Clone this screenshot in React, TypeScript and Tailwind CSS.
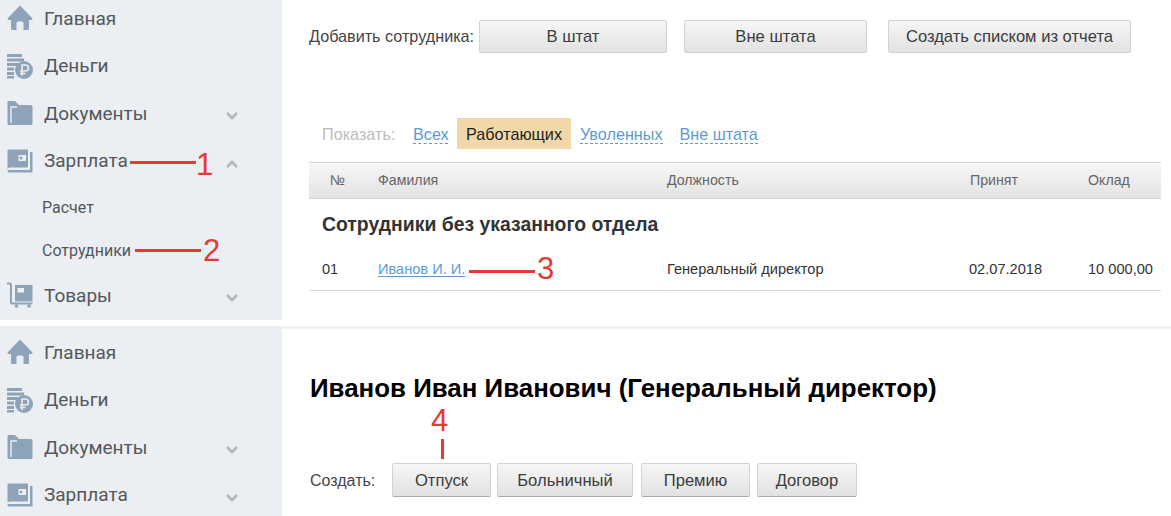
import React from 'react';

const sans = 'font-["Liberation_Sans",Arial,sans-serif]';

function HomeIcon() {
  return (
    <svg width="26" height="26" viewBox="0 0 26 26" fill="#8fa3b8">
      <path d="M13 0.5 L25.5 13.5 L25 15 L22 15 L22 23.5 Q22 25 20.5 25 L16.5 25 L16.5 18 Q16.5 16.5 15 16.5 L11 16.5 Q9.5 16.5 9.5 18 L9.5 25 L5.5 25 Q4 25 4 23.5 L4 15 L1 15 L0.5 13.5 Z" />
    </svg>
  );
}

function MoneyIcon() {
  return (
    <svg width="26" height="26" viewBox="0 0 26 26" fill="#8fa3b8">
      <rect x="0" y="1" width="15" height="3" />
      <rect x="0" y="5.5" width="17" height="3" />
      <rect x="0" y="10" width="11" height="3" />
      <rect x="0" y="14.5" width="7" height="3" />
      <rect x="0" y="19" width="7" height="3" />
      <rect x="0" y="23" width="7" height="2.5" />
      <circle cx="17" cy="17" r="9" />
      <path d="M15 23 V12 H18.5 A3 3 0 0 1 18.5 18 H13 M13 20.5 H18.5" fill="none" stroke="#ebeef2" strokeWidth="1.6" />
    </svg>
  );
}

function FolderIcon() {
  return (
    <svg width="26" height="26" viewBox="0 0 26 26" fill="#8fa3b8">
      <path d="M1.5 1 H8 L12 5 H23.5 Q25.5 5 25.5 7 V23.5 Q25.5 25 24 25 H2 Q0.5 25 0.5 23.5 V2 Q0.5 1 1.5 1 Z" />
      <path d="M4 23 V7 H10" fill="none" stroke="#ebeef2" strokeWidth="1.4" />
    </svg>
  );
}

function WalletIcon() {
  return (
    <svg width="26" height="24" viewBox="0 0 26 24" fill="#8fa3b8">
      <path d="M1.5 0.5 H21 V17 Q21 18.5 19.5 18.5 H2.5 L0.5 19.5 V1.5 Q0.5 0.5 1.5 0.5 Z" />
      <path d="M23 3 H25.5 V23.5 H2 Q0.5 23.5 0.5 21 H23 Z" />
      <rect x="11.5" y="6" width="7.5" height="6" fill="#ebeef2" />
      <circle cx="14" cy="9" r="1.5" fill="#8fa3b8" />
    </svg>
  );
}

function CartIcon() {
  return (
    <svg width="26" height="26" viewBox="0 0 26 26" fill="#8fa3b8">
      <path d="M0 0.5 H3.5 L5 2 V20.5 H25.5 V22.5 H4 L3 21.5 V3 L2.5 2.5 H0 Z" />
      <path d="M8 3 H25.5 V19.5 H8 Z M10.5 6 V10.5 H17 V6 Z" fillRule="evenodd" />
      <circle cx="9.5" cy="24" r="1.8" />
      <circle cx="22" cy="24" r="1.8" />
    </svg>
  );
}

function Chevron({ up }: { up?: boolean }) {
  return (
    <svg width="12" height="8" viewBox="0 0 12 8" fill="none" stroke="#b4b6b8" strokeWidth="2.6">
      <path d={up ? 'M1 7 L6 2 L11 7' : 'M1 1 L6 6 L11 1'} />
    </svg>
  );
}

function NavRow({ icon, label, chevron }: { icon: React.ReactNode; label: string; chevron?: 'up' | 'down' }) {
  return (
    <div className="flex items-center h-[47.5px] shrink-0 pl-[7px]">
      <div className="w-[26px] h-[26px] flex items-center justify-center">{icon}</div>
      <span className="ml-[11px] pt-[1px] text-[19px] text-[#54585c]">{label}</span>
      {chevron && (
        <span className="ml-auto mr-[44px] mt-[6px] flex">
          <Chevron up={chevron === 'up'} />
        </span>
      )}
    </div>
  );
}

function Btn({ children, className }: { children: React.ReactNode; className: string }) {
  return (
    <button className={`flex items-center justify-center pt-[2px] rounded-[2px] border border-[#d2d2d2] bg-gradient-to-b from-[#f6f6f6] to-[#e2e2e2] text-[16.6px] text-[#3c3c3c] ${className}`}>
      {children}
    </button>
  );
}

function Tab({ children, className }: { children: React.ReactNode; className: string }) {
  return (
    <a className={`mt-[2px] text-[16.2px] leading-[18px] text-[#5b9bd5] border-b border-dashed border-[#5b9bd5] ${className}`}>
      {children}
    </a>
  );
}

export default function App() {
  return (
    <div className={`relative w-[1171px] h-[516px] overflow-hidden bg-white ${sans}`}>
      {/* top part */}
      <div className="flex h-[320px]">
        <aside className="w-[282px] h-full bg-[#ebeef2] overflow-hidden font-['Roboto',sans-serif]">
          <div className="-mt-[5.5px]">
            <NavRow icon={<HomeIcon />} label="Главная" />
            <NavRow icon={<MoneyIcon />} label="Деньги" />
            <NavRow icon={<FolderIcon />} label="Документы" chevron="down" />
            <NavRow icon={<WalletIcon />} label="Зарплата" chevron="up" />
            <div className="pl-[42px] text-[16px] text-[#54585c]">
              <div className="h-[46px] flex items-center">Расчет</div>
              <div className="h-[41px] flex items-center">Сотрудники</div>
            </div>
            <NavRow icon={<CartIcon />} label="Товары" chevron="down" />
          </div>
        </aside>

        <main className="flex-1 pl-[27px] pt-[20px]">
          <div className="flex items-center h-[33px]">
            <span className="w-[170px] text-[16.2px] text-[#444]">Добавить сотрудника:</span>
            <Btn className="w-[188px] h-[33px]">В штат</Btn>
            <Btn className="w-[183px] h-[33px] ml-[17px]">Вне штата</Btn>
            <Btn className="w-[243px] h-[33px] ml-[21px]">Создать списком из отчета</Btn>
          </div>

          <div className="flex items-center h-[31px] mt-[65px] pl-[13px]">
            <span className="w-[91px] mt-[2px] text-[16.2px] text-[#bcbcbc]">Показать:</span>
            <Tab className="w-[35px]">Всех</Tab>
            <span className="ml-[9px] w-[114px] h-[31px] pt-[1px] flex items-center justify-center bg-[#f0d8a8] text-[16.2px] text-[#222]">Работающих</span>
            <Tab className="ml-[9px]">Уволенных</Tab>
            <Tab className="ml-[17px]">Вне штата</Tab>
          </div>

          <div className="w-[852px] mt-[13px]">
            <div className="grid grid-cols-[69px_289px_303px_118px_73px] items-center h-[37px] pt-[1px] border-y border-[#d6d6d6] bg-gradient-to-b from-[#f6f6f6] to-[#e4e4e4] text-[14.2px] text-[#666]">
              <span className="pl-[21px]">№</span>
              <span>Фамилия</span>
              <span>Должность</span>
              <span>Принят</span>
              <span>Оклад</span>
            </div>
            <div className="pl-[13px] pt-[14px] text-[19.4px] leading-[22px] font-bold text-[#333]">
              Сотрудники без указанного отдела
            </div>
            <div className="grid grid-cols-[69px_289px_302px_119px_73px] items-center h-[45px] mt-[11px] pt-[4px] border-b border-[#d8d8d8] text-[14.6px] text-[#333]">
              <span className="pl-[13px]">01</span>
              <span>
                <a className="text-[#5b9bd5] underline underline-offset-2">Иванов И. И.</a>
              </span>
              <span>Генеральный директор</span>
              <span>02.07.2018</span>
              <span>10 000,00</span>
            </div>
          </div>
        </main>
      </div>

      <div className="h-[6px]" />

      {/* bottom part */}
      <div className="flex h-[190px]">
        <aside className="w-[282px] h-full bg-[#ebeef2] overflow-hidden pt-[2.5px] font-['Roboto',sans-serif]">
          <NavRow icon={<HomeIcon />} label="Главная" />
          <NavRow icon={<MoneyIcon />} label="Деньги" />
          <NavRow icon={<FolderIcon />} label="Документы" chevron="down" />
          <NavRow icon={<WalletIcon />} label="Зарплата" chevron="down" />
        </aside>

        <main className="flex-1 pl-[28px] border-t-[3px] border-[#f0f0f0]">
          <h1 className="mt-[42px] text-[25.9px] leading-[34px] font-bold text-black">
            Иванов Иван Иванович (Генеральный директор)
          </h1>
          <div className="flex items-center h-[34px] mt-[58px]">
            <span className="w-[82px] pt-[1px] text-[16px] text-[#444]">Создать:</span>
            <Btn className="w-[99px] h-[34px] border-b-[#aaa] border-b-dotted">Отпуск</Btn>
            <Btn className="w-[136px] h-[34px] ml-[6px] border-b-[#aaa] border-b-dotted">Больничный</Btn>
            <Btn className="w-[109px] h-[34px] ml-[8px] border-b-[#aaa] border-b-dotted">Премию</Btn>
            <Btn className="w-[100px] h-[34px] ml-[7px] border-b-[#aaa] border-b-dotted">Договор</Btn>
          </div>
        </main>
      </div>

      {/* red notes over the screenshot */}
      <div className="absolute left-[130px] top-[161px] w-[66px] h-[3px] bg-[#e53a32]" />
      <span className="absolute left-[196px] top-[147px] text-[31px] leading-[35px] text-[#e53a32]">1</span>
      <div className="absolute left-[135px] top-[249px] w-[66px] h-[3px] bg-[#e53a32]" />
      <span className="absolute left-[203px] top-[233px] text-[31px] leading-[35px] text-[#e53a32]">2</span>
      <div className="absolute left-[469px] top-[270px] w-[66px] h-[3px] bg-[#e53a32]" />
      <span className="absolute left-[537px] top-[251px] text-[31px] leading-[35px] text-[#e53a32]">3</span>
      <span className="absolute left-[431px] top-[403px] text-[31px] leading-[35px] text-[#e53a32]">4</span>
      <div className="absolute left-[441px] top-[439px] w-[3px] h-[20px] bg-[#e53a32]" />
    </div>
  );
}
